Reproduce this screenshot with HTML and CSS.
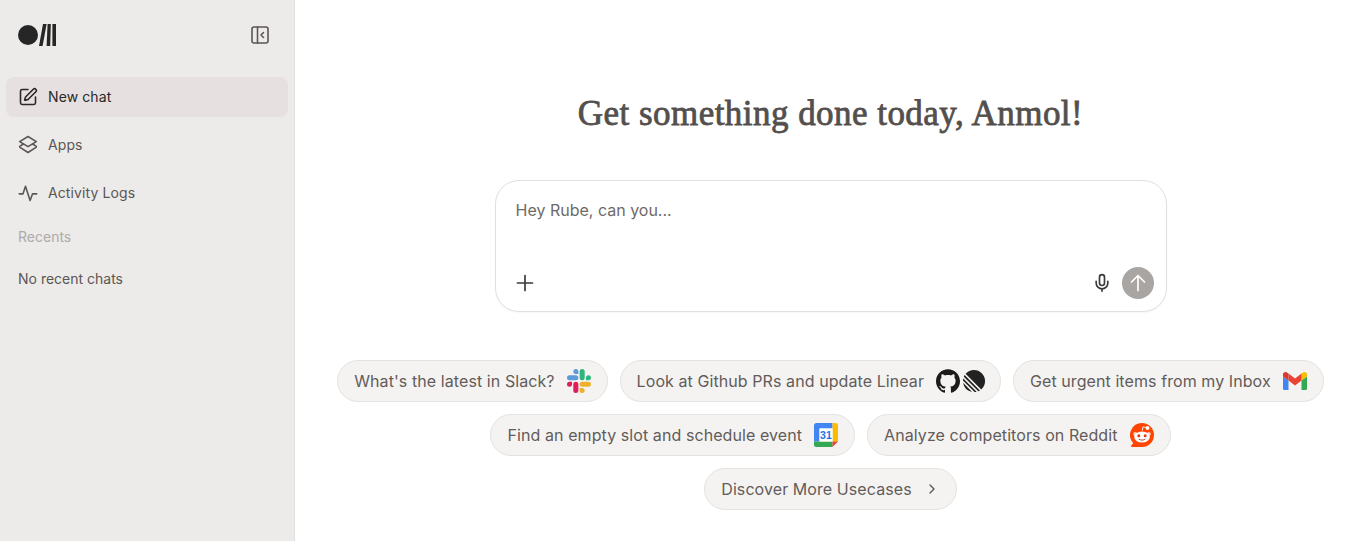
FILE: index.html
```html
<!DOCTYPE html>
<html lang="en">
<head>
    <meta charset="UTF-8">
    <meta name="viewport" content="width=device-width, initial-scale=1.0">
    <title>Rube</title>
    <link rel="stylesheet" href="styles.css">
</head>
<body>
    <aside class="sidebar">
        <div class="sidebar-head">
            <svg class="logo" width="40" height="24" viewBox="0 0 40 24" fill="#262626">
                <circle cx="10" cy="12" r="10"/>
                <path d="M21 23h3.600l4-22H25z"/>
                <path d="M29.600 1h3.200l-.6 22H28.600z"/>
                <rect x="34.400" y="1" width="3.600" height="22"/>
            </svg>
            <button class="collapse" aria-label="Collapse sidebar">
                <svg width="20" height="20" viewBox="0 0 20 20" fill="none" stroke="#5c5654" stroke-width="1.6" stroke-linecap="round" stroke-linejoin="round">
                    <rect x="2" y="2" width="16" height="16" rx="2"/>
                    <path d="M7.500 2v16"/>
                    <path d="M13.500 7.500 11 10l2.500 2.500"/>
                </svg>
            </button>
        </div>

        <nav class="nav">
            <a class="nav-item active">
                <svg class="nav-icon" viewBox="0 0 24 24">
                    <path d="M12 3H5a2 2 0 0 0-2 2v14a2 2 0 0 0 2 2h14a2 2 0 0 0 2-2v-7"/>
                    <path d="M18.375 2.625a1 1 0 0 1 3 3l-9.013 9.014a2 2 0 0 1-.853.505l-2.873.84a.5.5 0 0 1-.62-.62l.84-2.873a2 2 0 0 1 .506-.852z"/>
                </svg>
                <span class="nav-label">New chat</span>
            </a>
            <a class="nav-item">
                <svg class="nav-icon" viewBox="0 0 24 24">
                    <path d="M12 1.800 2 8l10 6 10-6z"/>
                    <path d="M6.600 10.800 2.400 13.400c-.5.400-.5 1 0 1.400L12 21l9.600-6.200c.5-.4.500-1 0-1.400l-4.200-2.600"/>
                </svg>
                <span class="nav-label">Apps</span>
            </a>
            <a class="nav-item">
                <svg class="nav-icon" viewBox="0 0 24 24">
                    <path d="M1.500 13h4.500l3-9 5.500 17 3-8h5"/>
                </svg>
                <span class="nav-label">Activity Logs</span>
            </a>
        </nav>

        <div class="recents-title">Recents</div>
        <div class="recents-empty">No recent chats</div>
    </aside>

    <main class="main">
        <h1 class="greeting">Get something done today, Anmol!</h1>

        <form class="composer">
            <textarea class="composer-input" placeholder="Hey Rube, can you..."></textarea>
            <div class="composer-bar">
                <button type="button" class="plain-btn" aria-label="Add">
                    <svg width="18" height="18" viewBox="0 0 18 18" fill="none" stroke="#3d3a39" stroke-width="1.700" stroke-linecap="round">
                        <path d="M9 1.500v15M1.500 9h15"/>
                    </svg>
                </button>
                <div class="composer-actions">
                    <button type="button" class="plain-btn" aria-label="Voice">
                        <svg width="20" height="20" viewBox="0 0 24 24" fill="none" stroke="#3d3a39" stroke-width="2" stroke-linecap="round" stroke-linejoin="round">
                            <path d="M12 2a3 3 0 0 0-3 3v7a3 3 0 0 0 6 0V5a3 3 0 0 0-3-3Z"/>
                            <path d="M19 10v2a7 7 0 0 1-14 0v-2"/>
                            <path d="M12 19v3"/>
                        </svg>
                    </button>
                    <button type="button" class="send-btn" aria-label="Send">
                        <svg width="20" height="20" viewBox="0 0 20 20" fill="none" stroke="#fff" stroke-width="1.700" stroke-linecap="round" stroke-linejoin="round">
                            <path d="M10 17.500v-15M3.500 9 10 2.500 16.500 9"/>
                        </svg>
                    </button>
                </div>
            </div>
        </form>

        <div class="chips">
            <div class="chip-row">
                <button class="chip">
                    What's the latest in Slack?
                    <svg class="chip-icon" viewBox="0 0 24 24">
                        <path fill="#e01e5a" d="M5.042 15.165a2.528 2.528 0 0 1-2.52 2.523A2.528 2.528 0 0 1 0 15.165a2.527 2.527 0 0 1 2.522-2.52h2.52v2.52zM6.313 15.165a2.527 2.527 0 0 1 2.521-2.52 2.527 2.527 0 0 1 2.521 2.52v6.313A2.528 2.528 0 0 1 8.834 24a2.528 2.528 0 0 1-2.521-2.522v-6.313z"/>
                        <path fill="#5b9bd8" d="M8.834 5.042a2.528 2.528 0 0 1-2.521-2.52A2.528 2.528 0 0 1 8.834 0a2.528 2.528 0 0 1 2.521 2.522v2.52H8.834zM8.834 6.313a2.528 2.528 0 0 1 2.521 2.521 2.528 2.528 0 0 1-2.521 2.521H2.522A2.528 2.528 0 0 1 0 8.834a2.528 2.528 0 0 1 2.522-2.521h6.312z"/>
                        <path fill="#2eb67d" d="M18.956 8.834a2.528 2.528 0 0 1 2.522-2.521A2.528 2.528 0 0 1 24 8.834a2.528 2.528 0 0 1-2.522 2.521h-2.522V8.834zM17.688 8.834a2.528 2.528 0 0 1-2.523 2.521 2.527 2.527 0 0 1-2.52-2.521V2.522A2.527 2.527 0 0 1 15.165 0a2.528 2.528 0 0 1 2.523 2.522v6.312z"/>
                        <path fill="#ecb22e" d="M15.165 18.956a2.528 2.528 0 0 1 2.523 2.522A2.528 2.528 0 0 1 15.165 24a2.527 2.527 0 0 1-2.52-2.522v-2.522h2.52zM15.165 17.688a2.527 2.527 0 0 1-2.52-2.523 2.526 2.526 0 0 1 2.52-2.52h6.313A2.527 2.527 0 0 1 24 15.165a2.528 2.528 0 0 1-2.522 2.523h-6.313z"/>
                    </svg>
                </button>
                <button class="chip">
                    Look at Github PRs and update Linear
                    <span class="chip-icons">
                        <svg class="chip-icon" viewBox="0 0 24 24" fill="#1b1b1b">
                            <path d="M12 .297c-6.63 0-12 5.373-12 12 0 5.303 3.438 9.8 8.205 11.385.6.113.82-.258.82-.577 0-.285-.01-1.04-.015-2.04-3.338.724-4.042-1.61-4.042-1.61C4.422 18.07 3.633 17.7 3.633 17.7c-1.087-.744.084-.729.084-.729 1.205.084 1.838 1.236 1.838 1.236 1.07 1.835 2.809 1.305 3.495.998.108-.776.417-1.305.76-1.605-2.665-.3-5.466-1.332-5.466-5.93 0-1.31.465-2.38 1.235-3.22-.135-.303-.54-1.523.105-3.176 0 0 1.005-.322 3.3 1.23.96-.267 1.98-.399 3-.405 1.02.006 2.04.138 3 .405 2.28-1.552 3.285-1.23 3.285-1.23.645 1.653.24 2.873.12 3.176.765.84 1.23 1.91 1.23 3.22 0 4.61-2.805 5.625-5.475 5.92.42.36.81 1.096.81 2.22 0 1.606-.015 2.896-.015 3.286 0 .315.21.69.825.57C20.565 22.092 24 17.592 24 12.297c0-6.627-5.373-12-12-12"/>
                        </svg>
                        <svg class="chip-icon" viewBox="-1 -1 26 26" fill="#222">
                            <path d="M2.886 4.18A11.982 11.982 0 0 1 11.99 0C18.624 0 24 5.376 24 12.009c0 3.64-1.62 6.903-4.18 9.105L2.887 4.18ZM1.817 5.626l16.556 16.556c-.524.33-1.075.62-1.65.866L.951 7.277c.247-.575.537-1.126.866-1.65ZM.322 9.163l14.515 14.515c-.71.172-1.443.282-2.195.322L0 11.358a12 12 0 0 1 .322-2.195Zm-.17 4.862 9.823 9.824a12.02 12.02 0 0 1-9.824-9.824Z"/>
                        </svg>
                    </span>
                </button>
                <button class="chip">
                    Get urgent items from my Inbox
                    <svg class="chip-icon" viewBox="0 0 24 24">
                        <path fill="#4285f4" d="M1.600 21h3.900v-9.500L0 7.400v12c0 .9.700 1.600 1.600 1.600z"/>
                        <path fill="#34a853" d="M18.500 21h3.900c.9 0 1.600-.7 1.600-1.600v-12l-5.500 4.100z"/>
                        <path fill="#fbbc04" d="M18.500 4.500v7L24 7.400V5.300c0-2-2.300-3.100-3.900-1.900z"/>
                        <path fill="#ea4335" d="M5.500 11.500v-7L12 9.400l6.500-4.900v7L12 16.400z"/>
                        <path fill="#d93a2f" d="M0 5.300v2.100l5.500 4.100v-7L3.900 3.400C2.300 2.200 0 3.300 0 5.300z"/>
                    </svg>
                </button>
            </div>
            <div class="chip-row">
                <button class="chip">
                    Find an empty slot and schedule event
                    <svg class="chip-icon" viewBox="0 0 24 24">
                        <path fill="#4285f4" d="M2.500 0h16v5.500H5.500v13H0v-16A2.500 2.500 0 0 1 2.500 0z"/>
                        <path fill="#fbbc04" d="M18.500 0h3A2.500 2.500 0 0 1 24 2.500v16h-5.500z"/>
                        <path fill="#34a853" d="M0 18.500h18.500V24h-16A2.500 2.500 0 0 1 0 21.500z"/>
                        <path fill="#ea4335" d="M18.500 18.500H24L18.500 24z"/>
                        <rect x="5.500" y="5.500" width="13" height="13" fill="#fff"/>
                        <text class="cal-day" x="12" y="16">31</text>
                    </svg>
                </button>
                <button class="chip">
                    Analyze competitors on Reddit
                    <svg class="chip-icon" viewBox="0 0 24 24">
                        <path fill="#ff4500" d="M12 0a12 12 0 0 1 0 24H1.800c-.9 0-1.300-1-.7-1.600l2.200-2.200A12 12 0 0 1 12 0z"/>
                        <circle cx="17.600" cy="5" r="1.900" fill="#fff"/>
                        <path d="M12.300 7.500 13 3.800l3.500.8" fill="none" stroke="#fff" stroke-width=".9"/>
                        <circle cx="5.200" cy="11" r="2" fill="#ffd0bd"/>
                        <circle cx="18.800" cy="11" r="2" fill="#ffd0bd"/>
                        <ellipse cx="12" cy="14" rx="7.800" ry="5.600" fill="#fff"/>
                        <circle cx="8.800" cy="12.800" r="1.500" fill="#e8380d"/>
                        <circle cx="15.200" cy="12.800" r="1.500" fill="#e8380d"/>
                        <path d="M9 16.200c1.800 1.300 4.200 1.300 6 0" fill="none" stroke="#9a3a20" stroke-width=".9" stroke-linecap="round"/>
                    </svg>
                </button>
            </div>
            <div class="chip-row">
                <button class="chip">
                    Discover More Usecases
                    <svg class="chip-chevron" viewBox="0 0 24 24" fill="none" stroke="#5c5654" stroke-width="2" stroke-linecap="round" stroke-linejoin="round">
                        <path d="m9 18 6-6-6-6"/>
                    </svg>
                </button>
            </div>
        </div>
    </main>
</body>
</html>
```

FILE: styles.css
```css
* {
    box-sizing: border-box;
}
body {
    font-family: Inter, "Liberation Sans", sans-serif;
    background-color: #fff;
    color: #5c5654;
    display: flex;
    height: 100vh;
    margin: 0;
    overflow: hidden;
}
button {
    font-family: inherit;
    cursor: pointer;
}

/* sidebar */
.sidebar {
    width: 295px;
    flex-shrink: 0;
    background-color: #ecebe9;
    border-right: 1px solid #e2e0de;
    font-size: 14px;
}
.sidebar-head {
    display: flex;
    align-items: center;
    justify-content: space-between;
    height: 70px;
    padding: 0 24px 0 18px;
}
.collapse {
    display: flex;
    padding: 0;
    border: none;
    background: none;
}
.nav {
    display: flex;
    flex-direction: column;
    gap: 8px;
    margin-top: 7px;
    padding: 0 6px;
}
.nav-item {
    display: flex;
    align-items: center;
    gap: 10px;
    height: 40px;
    padding: 0 12px;
    border-radius: 8px;
    letter-spacing: 0.1px;
}
.nav-item.active {
    background-color: #e6e0e0;
    color: #2b2827;
}
.nav-label {
    margin-top: -2px;
}
.nav-icon {
    width: 20px;
    height: 20px;
    fill: none;
    stroke: currentColor;
    stroke-width: 1.9;
    stroke-linecap: round;
    stroke-linejoin: round;
}
.recents-title {
    margin-top: 15px;
    padding: 0 18px;
    line-height: 17px;
    color: #aeaaa8;
}
.recents-empty {
    margin-top: 25px;
    padding: 0 18px;
    line-height: 17px;
}

/* main */
.main {
    flex: 1;
    display: flex;
    flex-direction: column;
    align-items: center;
    padding-top: 94px;
}
.greeting {
    margin: 0;
    font-family: "Liberation Serif", serif;
    font-size: 35px;
    line-height: 40px;
    font-weight: 400;
    letter-spacing: 0.46px;
    -webkit-text-stroke: 0.8px #544f4d;
    color: #544f4d;
}
.composer {
    display: flex;
    flex-direction: column;
    justify-content: space-between;
    width: 672px;
    height: 132px;
    margin-top: 46px;
    padding: 19px 12px 12px 20px;
    border: 1px solid #e2e0de;
    border-radius: 24px;
    background-color: #fff;
    box-shadow: 0 1px 2px rgba(0, 0, 0, 0.04);
}
.composer-input {
    flex: 1;
    padding: 0;
    border: none;
    outline: none;
    resize: none;
    font-family: inherit;
    font-size: 16px;
    line-height: 20px;
    color: #5c5654;
}
.composer-input::placeholder {
    color: #6f6a68;
}
.composer-bar {
    display: flex;
    align-items: center;
    justify-content: space-between;
}
.composer-actions {
    display: flex;
    align-items: center;
    gap: 10px;
}
.plain-btn {
    display: flex;
    padding: 0;
    border: none;
    background: none;
}
.send-btn {
    display: flex;
    align-items: center;
    justify-content: center;
    width: 32px;
    height: 32px;
    padding: 0;
    border: none;
    border-radius: 50%;
    background-color: #a8a5a3;
}

/* suggestion chips */
.chips {
    display: flex;
    flex-direction: column;
    gap: 12px;
    margin-top: 48px;
}
.chip-row {
    display: flex;
    justify-content: center;
    gap: 12px;
}
.chip {
    display: flex;
    align-items: center;
    gap: 12px;
    height: 42px;
    padding: 0 16px;
    border: 1px solid #e5e2e0;
    border-radius: 21px;
    background-color: #f5f3f1;
    font-size: 16px;
    letter-spacing: 0.08px;
    color: #625c5a;
}
.chip-icons {
    display: flex;
    gap: 2px;
    margin-right: -2px;
}
.chip-icon {
    width: 24px;
    height: 24px;
}
.chip-chevron {
    width: 16px;
    height: 16px;
}
.cal-day {
    font-family: "Liberation Sans", sans-serif;
    font-size: 10.500px;
    font-weight: 700;
    text-anchor: middle;
    fill: #1a73e8;
}
```
